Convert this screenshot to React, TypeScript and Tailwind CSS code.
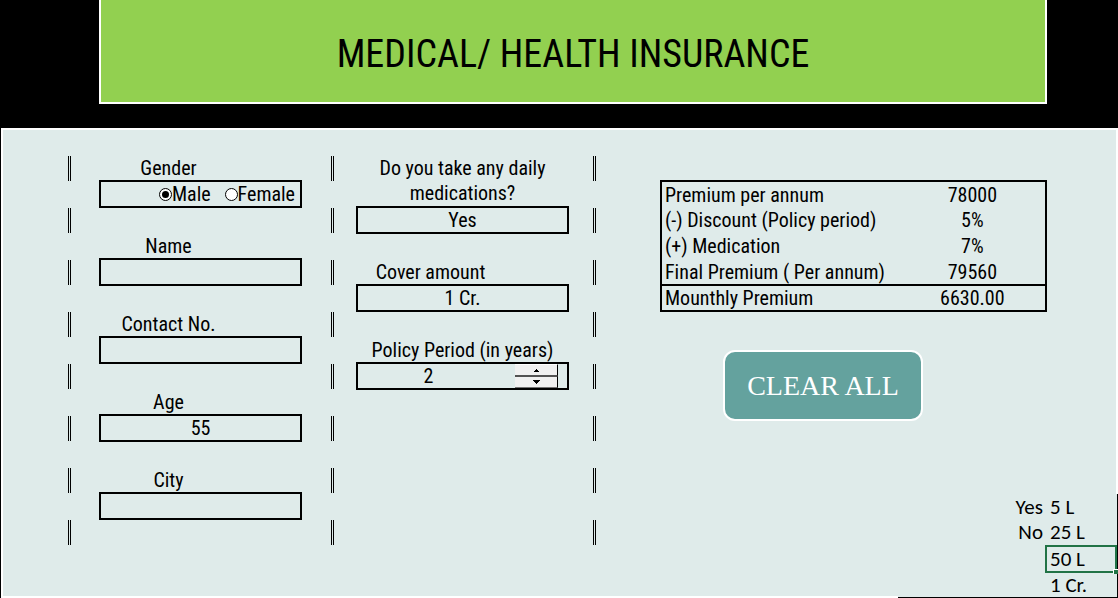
import { useState } from "react";
import type { ReactNode } from "react";

const BOX = "block h-[28px] w-full border-2 border-black bg-transparent leading-[22px]";

function Divider() {
  return (
    <div className="mt-px flex w-[3px] shrink-0 flex-col gap-[27px]" aria-hidden="true">
      {Array.from({ length: 8 }, (_, i) => (
        <div key={i} className="h-[25px] border-x border-black" />
      ))}
    </div>
  );
}

function Field({ id, label, children }: { id: string; label: string; children: ReactNode }) {
  return (
    <div>
      <label htmlFor={id} className="block h-[25px] pr-16 text-center leading-[26px]">
        {label}
      </label>
      {children}
    </div>
  );
}

const RADIO =
  "grid size-[13px] appearance-none place-content-center rounded-full border border-black bg-white before:size-[7px] before:rounded-full checked:before:bg-black";

const premiums = [
  ["Premium per annum", "78000"],
  ["(-) Discount (Policy period)", "5%"],
  ["(+) Medication", "7%"],
  ["Final Premium ( Per annum)", "79560"],
  ["Mounthly Premium", "6630.00"],
];

const covers = ["5 L", "25 L", "50 L", "1 Cr."];
const answers = ["Yes", "No", "", ""];
const rowHeights = ["h-[25px]", "h-[26px]", "h-[28px]", "h-[24px]"];

const blank = { gender: "", name: "", contact: "", age: "", city: "", medication: "", cover: "", period: 0 };

export default function App() {
  const [form, setForm] = useState({
    ...blank,
    gender: "Male",
    age: "55",
    medication: "Yes",
    cover: "1 Cr.",
    period: 2,
  });
  const set = (patch: Partial<typeof form>) => setForm({ ...form, ...patch });

  return (
    <div className="flex min-h-screen flex-col bg-black pl-px font-['Roboto_Condensed','Liberation_Sans_Narrow',sans-serif] text-[20px] font-[450] text-black">
      <header className="mr-[71px] mb-6 ml-[98px] border-x-2 border-b-2 border-white bg-[#92d050]">
        <h1 className="pt-[30px] pb-6 text-center text-[38px] leading-[48px]">MEDICAL/ HEALTH INSURANCE</h1>
      </header>

      <main className="flex flex-1 border-2 border-white bg-[#dfebea] pl-[65px]">
        <div className="flex min-w-0 flex-1 pt-[25px]">
          <Divider />
          <section className="ml-7 flex min-w-0 flex-[203] flex-col gap-[25px]">
            <fieldset className="min-w-0">
              <legend className="block h-[25px] w-full pr-16 text-center leading-[26px]">Gender</legend>
              <div className="flex h-[28px] items-center justify-end gap-[14px] border-2 border-black pr-[5px]">
                {["Male", "Female"].map((g) => (
                  <label key={g} className="flex items-center">
                    <input
                      type="radio"
                      name="gender"
                      className={RADIO}
                      checked={form.gender === g}
                      onChange={() => set({ gender: g })}
                    />
                    {g}
                  </label>
                ))}
              </div>
            </fieldset>
            <Field id="name" label="Name">
              <input id="name" className={`${BOX} text-center`} value={form.name} onChange={(e) => set({ name: e.target.value })} />
            </Field>
            <Field id="contact" label="Contact No.">
              <input id="contact" className={`${BOX} text-center`} value={form.contact} onChange={(e) => set({ contact: e.target.value })} />
            </Field>
            <Field id="age" label="Age">
              <input id="age" className={`${BOX} text-center`} value={form.age} onChange={(e) => set({ age: e.target.value })} />
            </Field>
            <Field id="city" label="City">
              <input id="city" className={`${BOX} text-center`} value={form.city} onChange={(e) => set({ city: e.target.value })} />
            </Field>
          </section>

          <div className="ml-[29px]">
            <Divider />
          </div>
          <section className="ml-[22px] flex min-w-0 flex-[213] flex-col gap-[25px]">
            <div>
              <label htmlFor="medication" className="block px-5 pt-px text-center leading-[25px]">
                Do you take any daily medications?
              </label>
              <select
                id="medication"
                className={`${BOX} appearance-none [text-align-last:center]`}
                value={form.medication}
                onChange={(e) => set({ medication: e.target.value })}
              >
                <option value=""></option>
                <option>Yes</option>
                <option>No</option>
              </select>
            </div>
            <Field id="cover" label="Cover amount">
              <select
                id="cover"
                className={`${BOX} appearance-none [text-align-last:center]`}
                value={form.cover}
                onChange={(e) => set({ cover: e.target.value })}
              >
                <option value=""></option>
                {covers.map((c) => (
                  <option key={c}>{c}</option>
                ))}
              </select>
            </Field>
            <div>
              <label htmlFor="period" className="block h-[25px] text-center leading-[26px]">
                Policy Period (in years)
              </label>
              <div className="flex h-[28px] border-2 border-black pr-[9px]">
                <input
                  id="period"
                  className="min-w-0 flex-1 bg-transparent pr-4 text-center"
                  value={form.period || ""}
                  onChange={(e) => set({ period: Number(e.target.value) || 0 })}
                />
                <div className="flex w-[43px] flex-col">
                  <button
                    type="button"
                    aria-label="Increase period"
                    className="flex flex-1 items-center justify-center border-t border-r border-b border-t-white border-r-black border-b-neutral-600 bg-[#f0f0f0]"
                    onClick={() => set({ period: form.period + 1 })}
                  >
                    <svg width="5" height="3" viewBox="0 0 5 3" shapeRendering="crispEdges" aria-hidden="true">
                      <path d="M2 0h1v1h1v1h1v1H0V2h1V1h1z" />
                    </svg>
                  </button>
                  <button
                    type="button"
                    aria-label="Decrease period"
                    className="flex flex-1 items-center justify-center border-t border-r border-b border-t-neutral-600 border-r-black border-b-neutral-500 bg-[#f0f0f0]"
                    onClick={() => set({ period: Math.max(0, form.period - 1) })}
                  >
                    <svg width="7" height="4" viewBox="0 0 7 4" shapeRendering="crispEdges" aria-hidden="true">
                      <path d="M0 0h7v1H6v1H5v1H4v1H3V3H2V2H1V1H0z" />
                    </svg>
                  </button>
                </div>
              </div>
            </div>
          </section>

          <div className="ml-6">
            <Divider />
          </div>
          <div className="ml-16 flex min-w-0 flex-[456] flex-col justify-between">
            <section className="mr-[69px] pt-[25px]">
              <table className="w-full border-collapse border-2 border-black">
                <tbody>
                  {premiums.map(([label, value], i) => (
                    <tr key={label} className={i === 4 ? "border-t-2 border-black" : ""}>
                      <th scope="row" className="h-[26px] w-[62%] p-0 pl-[3px] text-left leading-[24px] font-[450] whitespace-nowrap">
                        {label}
                      </th>
                      <td className="p-0 text-center leading-[24px]">{value}</td>
                    </tr>
                  ))}
                </tbody>
              </table>
              <button
                type="button"
                className="mt-[38px] ml-[63px] h-[71px] w-[200px] rounded-xl border-2 border-white bg-[#64a29e] font-['Liberation_Serif',serif] text-[28px] font-normal text-white"
                onClick={() => setForm(blank)}
              >
                CLEAR ALL
              </button>
            </section>

            <section className="-mr-[2px] -mb-[2px] flex w-[220px] justify-end self-end border-r border-b border-black bg-[#dfebea] font-['Carlito','Lato',sans-serif] text-[21px] font-normal">
              <table className="border-separate border-spacing-0">
                <tbody>
                  {covers.map((c, i) => (
                    <tr key={c} className={rowHeights[i]}>
                      <td className="p-0 pr-[2px] text-right leading-[22px]">{answers[i]}</td>
                      {c === "50 L" ? (
                        <td className="relative w-[72px] border-2 border-[#217346] p-0 pl-[3px] leading-[22px]">
                          {c}
                          <span className="absolute -right-[3px] -bottom-[3px] size-[5px] border-t border-l border-white bg-[#217346]" />
                        </td>
                      ) : (
                        <td className="w-[72px] p-0 pl-[5px] leading-[22px]">{c}</td>
                      )}
                    </tr>
                  ))}
                </tbody>
              </table>
            </section>
          </div>
        </div>
      </main>
    </div>
  );
}
